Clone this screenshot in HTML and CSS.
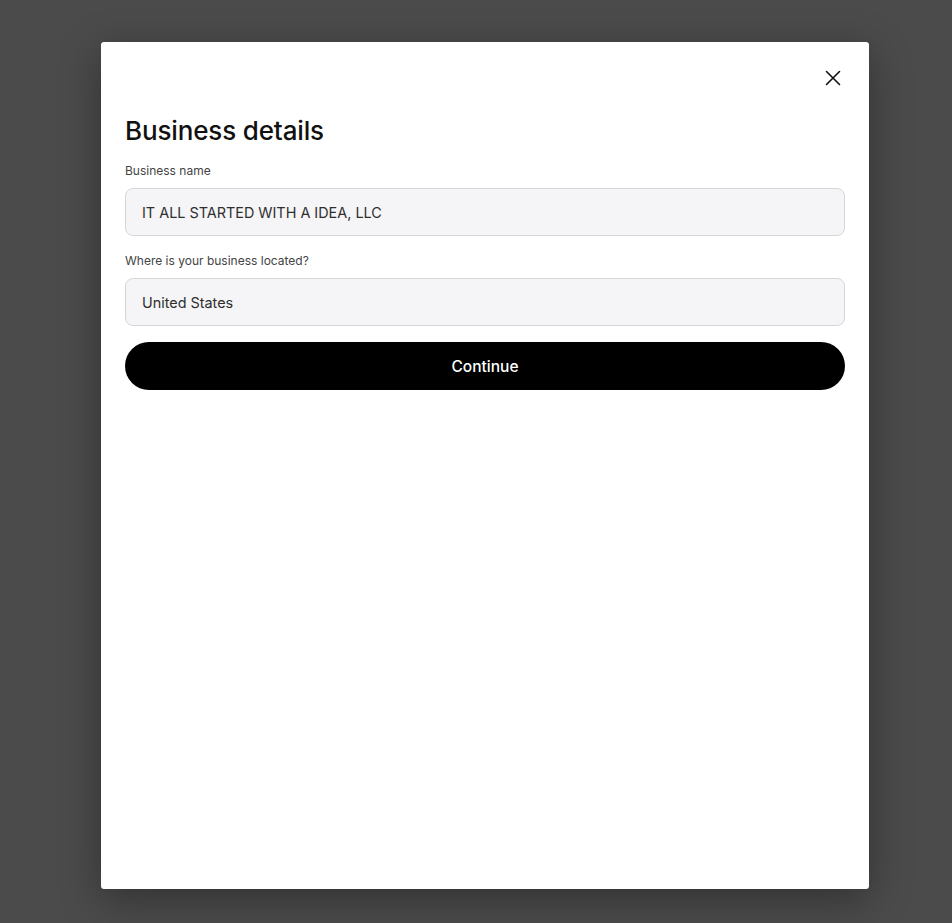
FILE: index.html
```html
<!DOCTYPE html>
<html lang="en">
<head>
<meta charset="utf-8">
<title>Business details</title>
<link rel="stylesheet" href="styles.css">
</head>
<body>
<div class="overlay">
  <div class="modal">
    <div class="modal-header">
      <button class="close" aria-label="Close">
        <svg width="16" height="16" viewBox="0 0 16 16" fill="none" stroke="#111" stroke-width="1.6" stroke-linecap="round"><path d="M1.5 1.5L14.5 14.5M14.5 1.5L1.5 14.5"/></svg>
      </button>
    </div>
    <h1 class="title">Business details</h1>
    <div class="field">
      <label class="label">Business name</label>
      <div class="input">IT ALL STARTED WITH A IDEA, LLC</div>
    </div>
    <div class="field">
      <label class="label">Where is your business located?</label>
      <div class="input">United States</div>
    </div>
    <button class="continue">Continue</button>
  </div>
</div>
</body>
</html>
```
FILE: styles.css
```css
html, body {
  margin: 0;
  padding: 0;
  height: 100%;
}
body {
  background: #4b4b4b;
  font-family: Inter, "Noto Sans", sans-serif;
}
.overlay {
  height: 100%;
  padding: 42px 83px 34px 101px;
  box-sizing: border-box;
  display: flex;
}
.modal {
  width: 768px;
  height: 847px;
  background: #fff;
  border-radius: 3px;
  box-shadow: 0 10px 40px rgba(0,0,0,0.35);
  padding: 0 24px;
  box-sizing: border-box;
  display: flex;
  flex-direction: column;
}
.modal-header {
  height: 72px;
  display: flex;
  justify-content: flex-end;
  align-items: flex-start;
}
.close {
  margin-top: 26px;
  margin-right: 0;
  width: 24px;
  height: 20px;
  padding: 0;
  border: 0;
  background: none;
  display: flex;
  align-items: center;
  justify-content: center;
}
.title {
  margin: 1px 0 0;
  font-size: 26px;
  line-height: 32px;
  font-weight: 500;
  color: #111;
  letter-spacing: -0.15px;
}
.field {
  display: flex;
  flex-direction: column;
}
.title + .field {
  margin-top: 15px;
}
.field + .field {
  margin-top: 16px;
}
.label {
  font-size: 12px;
  line-height: 16px;
  padding-top: 1px;
  color: #444;
  margin-bottom: 9px;
}
.input {
  height: 48px;
  box-sizing: border-box;
  background: #f5f5f7;
  border: 1px solid #d6d6da;
  border-radius: 8px;
  padding: 0 16px;
  display: flex;
  align-items: center;
  font-size: 14.4px;
  color: #2e2e2e;
}
.continue {
  margin-top: 16px;
  height: 48px;
  border: 0;
  border-radius: 24px;
  background: #000;
  color: #fff;
  font-family: inherit;
  font-size: 15.5px;
  font-weight: 500;
}
```
